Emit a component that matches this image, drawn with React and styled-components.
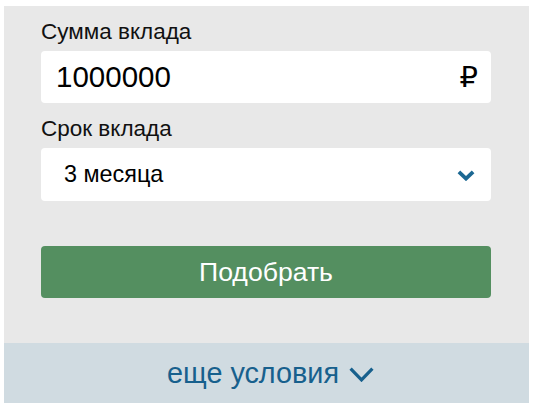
import React, { useState } from 'react'
import styled, { createGlobalStyle } from 'styled-components'

const GlobalStyle = createGlobalStyle`
    body {
        margin: 0;
        background: #ffffff;
        font-family: "Liberation Sans", Arial, sans-serif;
    }
`

const Chevron = ({ width, height, stroke }) => (
    <svg width={width} height={height} viewBox={`0 0 ${width} ${height}`} fill="none">
        <polyline
            points={`${stroke / 2},${stroke / 2} ${width / 2},${height - stroke / 2 - 0.5} ${width - stroke / 2},${stroke / 2}`}
            stroke="currentColor"
            strokeWidth={stroke}
            strokeLinecap="butt"
            strokeLinejoin="miter"
        />
    </svg>
)

export default function App() {
    const [amount, setAmount] = useState('1000000')
    const [term] = useState('3 месяца')

    return (
        <Page>
            <GlobalStyle />
            <Panel>
                <Form>
                    <Field>
                        <Label>Сумма вклада</Label>
                        <InputBox>
                            <AmountInput value={amount} onChange={e => setAmount(e.target.value)} />
                            <Currency>₽</Currency>
                        </InputBox>
                    </Field>
                    <Field>
                        <Label>Срок вклада</Label>
                        <SelectBox>
                            <span>{term}</span>
                            <SelectArrow>
                                <Chevron width={18} height={11} stroke={3.8} />
                            </SelectArrow>
                        </SelectBox>
                    </Field>
                    <SubmitButton>Подобрать</SubmitButton>
                </Form>
                <MoreBar>
                    еще условия
                    <Chevron width={25} height={15} stroke={3.2} />
                </MoreBar>
            </Panel>
        </Page>
    )
}

const Page = styled.div`
    padding: 6px 0 0 4px;
`

const Panel = styled.div`
    width: 525px;
    background: #e8e8e8;
`

const Form = styled.div`
    display: flex;
    flex-direction: column;
    padding: 13px 38px 45px 37px;
`

const Field = styled.div`
    display: flex;
    flex-direction: column;
    gap: 6px;
    & + & {
        margin-top: 13px;
    }
`

const Label = styled.div`
    font-size: 22.5px;
    line-height: 26px;
    color: #111111;
`

const InputBox = styled.div`
    display: flex;
    align-items: center;
    height: 52px;
    background: #ffffff;
    border-radius: 4px;
    padding: 0 13px 0 15px;
`

const AmountInput = styled.input`
    flex: 1;
    min-width: 0;
    border: none;
    outline: none;
    background: none;
    padding: 0;
    font-family: "Liberation Sans", Arial, sans-serif;
    font-size: 29.5px;
    color: #000000;
`

const Currency = styled.span`
    font-size: 29px;
    color: #000000;
    font-family: "Liberation Sans", "DejaVu Sans", sans-serif;
`

const SelectBox = styled.div`
    display: flex;
    align-items: center;
    justify-content: space-between;
    height: 53px;
    background: #ffffff;
    border-radius: 4px;
    padding: 0 16px 0 23px;
    font-size: 23.4px;
    color: #000000;
`

const SelectArrow = styled.span`
    display: flex;
    color: #1c6893;
    margin-top: 2px;
`

const SubmitButton = styled.button`
    margin-top: 45px;
    height: 52px;
    border: none;
    border-radius: 4px;
    background: #548f60;
    color: #ffffff;
    font-family: "Liberation Sans", Arial, sans-serif;
    font-size: 26.6px;
    cursor: pointer;
`

const MoreBar = styled.div`
    display: flex;
    align-items: center;
    justify-content: center;
    gap: 10px;
    height: 60px;
    background: #d0dbe1;
    color: #17608d;
    font-size: 28.8px;
    padding-left: 8px;
    cursor: pointer;
    svg {
        margin-top: 2px;
    }
`
